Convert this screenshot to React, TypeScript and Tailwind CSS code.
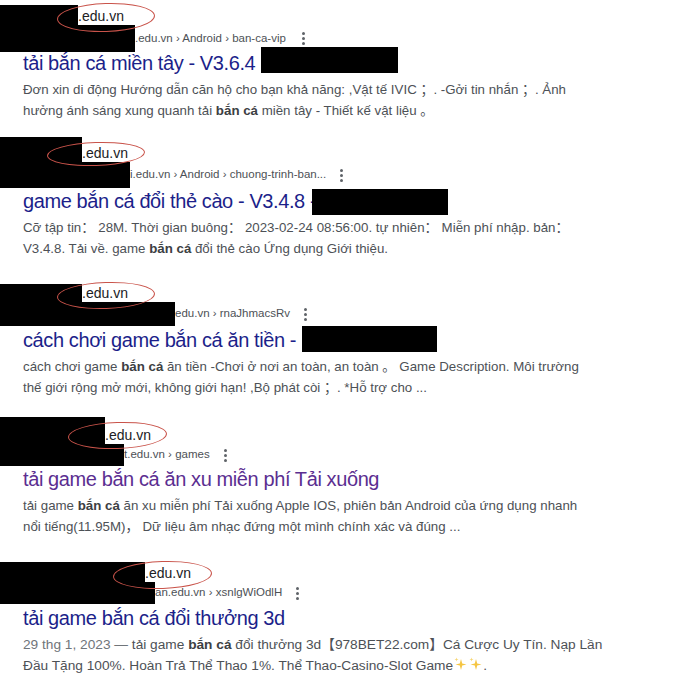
import React from "react";

type Result = {
  mt: string;
  aW: string;
  aH: string;
  bW: string;
  bH: string;
  crumb: string;
  kebabMl: string;
  ellipse: string;
  title: string;
  titleColor: string;
  titleMt: string;
  box?: string;
  descSize: string;
  desc: React.ReactNode;
};

const Kebab = ({ ml }: { ml: string }) => (
  <span className={`flex flex-col gap-[2px] ${ml}`}>
    <span className="block w-[3px] h-[3px] rounded-full bg-[#5f6368]" />
    <span className="block w-[3px] h-[3px] rounded-full bg-[#5f6368]" />
    <span className="block w-[3px] h-[3px] rounded-full bg-[#5f6368]" />
  </span>
);

const Sparkle = () => (
  <svg width="13" height="14" viewBox="0 0 13 14" className="inline-block align-[-1px] mx-[1px]">
    <path d="M7 2 L8.2 6.4 L12.5 7.5 L8.2 8.6 L7 13 L5.8 8.6 L1.5 7.5 L5.8 6.4 Z" fill="#f5c542" />
    <path d="M2.5 0.5 L3 2 L4.5 2.5 L3 3 L2.5 4.5 L2 3 L0.5 2.5 L2 2 Z" fill="#f7d774" />
  </svg>
);

const B = ({ children }: { children: React.ReactNode }) => (
  <b className="font-bold text-[#3c4043]">{children}</b>
);

const Semi = () => <span className="tracking-[-4px]">；</span>;

const results: Result[] = [
  {
    mt: "mt-[5px]",
    aW: "w-[78px]",
    aH: "h-[20px]",
    bW: "w-[135px]",
    bH: "h-[27px]",
    crumb: ".edu.vn › Android › ban-ca-vip",
    kebabMl: "ml-[16px]",
    ellipse: "left-[57px] top-[-2px] w-[98px] h-[29px]",
    title: "tải bắn cá miền tây - V3.6.4",
    titleColor: "text-[#1c1f8a]",
    titleMt: "-mt-[1px]",
    box: "ml-[6px] w-[137px] h-[26px] -translate-y-[3px]",
    descSize: "text-[13.3px]",
    desc: (
      <>
        Đơn xin di động Hướng dẫn căn hộ cho bạn khả năng: ,Vật tế IVIC <Semi /> . -Gởi tin nhắn <Semi /> . Ảnh
        <br />
        hưởng ánh sáng xung quanh tải <B>bắn cá</B> miền tây - Thiết kế vật liệu 。
      </>
    ),
  },
  {
    mt: "mt-[16px]",
    aW: "w-[82px]",
    aH: "h-[25px]",
    bW: "w-[130px]",
    bH: "h-[26px]",
    crumb: "i.edu.vn › Android › chuong-trinh-ban...",
    kebabMl: "ml-[14px]",
    ellipse: "left-[47px] top-[5px] w-[98px] h-[24px]",
    title: "game bắn cá đổi thẻ cào - V3.4.8 -",
    titleColor: "text-[#1c1f8a]",
    titleMt: "mt-[1px]",
    box: "-ml-[4px] w-[136px] h-[26px] translate-y-[1px]",
    descSize: "text-[13.3px]",
    desc: (
      <>
        Cỡ tập tin： 28M. Thời gian buông： 2023-02-24 08:56:00. tự nhiên： Miễn phí nhập. bản：
        <br />
        V3.4.8. Tải về. game <B>bắn cá</B> đổi thẻ cào Ứng dụng Giới thiệu.
      </>
    ),
  },
  {
    mt: "mt-[25px]",
    aW: "w-[82px]",
    aH: "h-[18px]",
    bW: "w-[175px]",
    bH: "h-[24px]",
    crumb: "edu.vn › rnaJhmacsRv",
    kebabMl: "ml-[14px]",
    ellipse: "left-[57px] top-[-2px] w-[98px] h-[27px]",
    title: "cách chơi game bắn cá ăn tiền -",
    titleColor: "text-[#1c1f8a]",
    titleMt: "mt-[2px]",
    box: "ml-[6px] w-[135px] h-[26px] -translate-y-[1px]",
    descSize: "text-[13.3px]",
    desc: (
      <>
        cách chơi game <B>bắn cá</B> ăn tiền -Chơi ở nơi an toàn, an toàn 。 Game Description. Môi trường
        <br />
        thế giới rộng mở mới, không giới hạn! ,Bộ phát còi <Semi /> . *Hỗ trợ cho ...
      </>
    ),
  },
  {
    mt: "mt-[19px]",
    aW: "w-[105px]",
    aH: "h-[27px]",
    bW: "w-[124px]",
    bH: "h-[22px]",
    crumb: "t.edu.vn › games",
    kebabMl: "ml-[14px]",
    ellipse: "left-[68px] top-[5px] w-[99px] h-[27px]",
    title: "tải game bắn cá ăn xu miễn phí Tải xuống",
    titleColor: "text-[#5b2e91]",
    titleMt: "mt-[1px]",
    descSize: "text-[13.3px]",
    desc: (
      <>
        tải game <B>bắn cá</B> ăn xu miễn phí Tải xuống Apple IOS, phiên bản Android của ứng dụng nhanh
        <br />
        nổi tiếng(11.95M)， Dữ liệu âm nhạc đứng một mình chính xác và đúng ...
      </>
    ),
  },
  {
    mt: "mt-[25px]",
    aW: "w-[145px]",
    aH: "h-[20px]",
    bW: "w-[155px]",
    bH: "h-[22px]",
    crumb: "an.edu.vn › xsnlgWiOdlH",
    kebabMl: "ml-[14px]",
    ellipse: "left-[113px] top-[-1px] w-[99px] h-[28px]",
    title: "tải game bắn cá đổi thưởng 3d",
    titleColor: "text-[#1c1f8a]",
    titleMt: "mt-[2px]",
    descSize: "text-[13.7px]",
    desc: (
      <>
        <span className="text-[#70757a]">29 thg 1, 2023 — </span>tải game <B>bắn cá</B> đổi thưởng 3d【978BET22.com】Cá Cược Uy Tín. Nạp Lần
        <br />
        Đầu Tặng 100%. Hoàn Trả Thể Thao 1%. Thể Thao-Casino-Slot Game
        <Sparkle />
        <Sparkle />.
      </>
    ),
  },
];

export default function App() {
  return (
    <div
      className="w-[680px] h-[688px] bg-white overflow-hidden flex flex-col"
      style={{ fontFamily: '"Liberation Sans", Arial, "Noto Sans CJK SC", sans-serif' }}
    >
      {results.map((r, i) => (
        <div key={i} className={`relative flex flex-col ${r.mt}`}>
          <div className={`flex items-end ${r.aH}`}>
            <div className={`${r.aW} h-full bg-black`} />
            <span className="text-[14px] leading-[16px] text-[#202124] mb-[1px]">.edu.vn</span>
          </div>
          <div className={`flex items-center ${r.bH}`}>
            <div className={`${r.bW} h-full bg-black`} />
            <span className="text-[11.5px] text-[#4d5156] whitespace-nowrap">{r.crumb}</span>
            <Kebab ml={r.kebabMl} />
          </div>
          <div className={`flex items-center h-[24px] pl-[23px] ${r.titleMt}`}>
            <span className={`text-[20px] leading-[24px] tracking-[-0.4px] whitespace-nowrap ${r.titleColor}`}>
              {r.title}
            </span>
            {r.box && <div className={`bg-black shrink-0 ${r.box}`} />}
          </div>
          <p className={`mt-[4px] pl-[23px] leading-[21px] text-[#4d5156] whitespace-nowrap ${r.descSize}`}>
            {r.desc}
          </p>
          <div
            className={`absolute border-[1.5px] border-[#c9534a] rounded-[50%] -rotate-2 pointer-events-none ${r.ellipse}`}
          />
        </div>
      ))}
    </div>
  );
}
